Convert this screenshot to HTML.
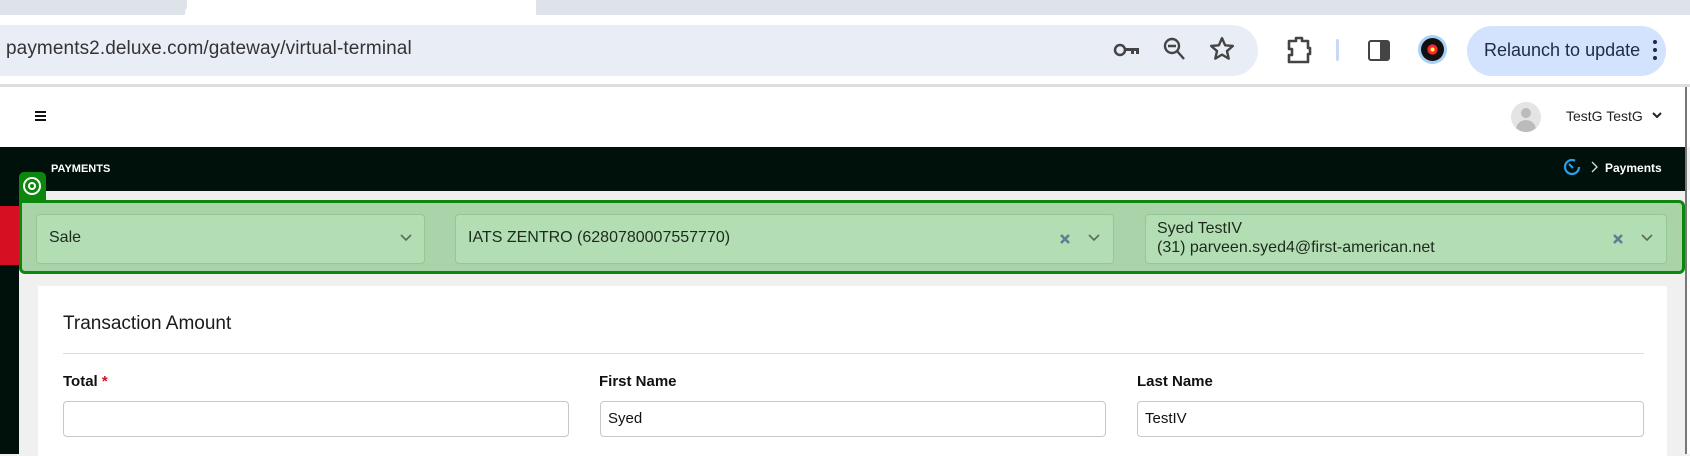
<!DOCTYPE html>
<html><head><meta charset="utf-8"><style>
*{box-sizing:border-box;margin:0;padding:0}
body{width:1690px;height:454px;overflow:hidden;background:#f0f0f0;font-family:"Liberation Sans",Arial,sans-serif;position:relative}
.abs{position:absolute}
</style></head><body>
<!-- tab strip -->
<div class="abs" style="left:0;top:0;width:1690px;height:15px;background:#dee3ea"></div>
<div class="abs" style="left:185px;top:0;width:351px;height:16px;background:#fff;border-radius:0"></div>
<div class="abs" style="left:175px;top:0;width:12px;height:15px;background:#dee3ea;border-bottom-right-radius:10px"></div>
<div class="abs" style="left:536px;top:0;width:12px;height:15px;background:#dee3ea;border-bottom-left-radius:10px"></div>
<!-- toolbar -->
<div class="abs" style="left:0;top:15px;width:1690px;height:70px;background:#fff"></div>
<div class="abs" style="left:-30px;top:25px;width:1288px;height:51px;background:#e9edf6;border-radius:26px"></div>
<div class="abs" style="left:6px;top:38px;font-size:19px;color:#333;letter-spacing:0.1px">payments2.deluxe.com/gateway/virtual-terminal</div>
<svg class="abs" style="left:1113px;top:38px" width="30" height="24" viewBox="0 0 30 24"><circle cx="7" cy="12" r="5" fill="none" stroke="#444" stroke-width="2.5"/><path d="M12 10h14v6h-3v-3h-2v3h-3v-3h-6z" fill="#444"/></svg>
<svg class="abs" style="left:1162px;top:36px" width="26" height="28" viewBox="0 0 26 28"><circle cx="10" cy="10" r="7" fill="none" stroke="#444" stroke-width="2.4"/><path d="M6 10h8M15 15l7 8" stroke="#444" stroke-width="2.4"/></svg>
<svg class="abs" style="left:1209px;top:36px" width="26" height="26" viewBox="0 0 24 24"><path d="M12 2l2.9 6.6 7.1.6-5.4 4.7 1.6 7-6.2-3.7-6.2 3.7 1.6-7L2 9.2l7.1-.6z" fill="none" stroke="#444" stroke-width="2.2" stroke-linejoin="round"/></svg>
<svg class="abs" style="left:1285px;top:35px" width="28" height="30" viewBox="0 0 28 30"><path d="M4 6h7V3h6v3h6v7h2v6h-2v8H4v-7h3v-6H4z" fill="none" stroke="#444" stroke-width="2.6" stroke-linejoin="round"/></svg>
<div class="abs" style="left:1336px;top:39px;width:3px;height:22px;background:#c9d9f3;border-radius:2px"></div>
<div class="abs" style="left:1368px;top:40px;width:22px;height:21px;border:2.5px solid #444;border-radius:3px;background:linear-gradient(90deg,#fff 55%,#444 55%)"></div>
<div class="abs" style="left:1418px;top:35px;width:29px;height:29px;border-radius:50%;background:#a9d0f7"></div>
<div class="abs" style="left:1421px;top:38px;width:23px;height:23px;border-radius:50%;background:radial-gradient(circle,#ff4 0 12%,#f23 14% 30%,#111 33%)"></div>
<div class="abs" style="left:1467px;top:26px;width:199px;height:50px;background:#d3e3fd;border-radius:25px"></div>
<div class="abs" style="left:1484px;top:40px;font-size:18px;color:#1f2a44">Relaunch to update</div>
<div class="abs" style="left:1653px;top:40px;width:4px;height:4px;border-radius:50%;background:#1f2a44;box-shadow:0 8px 0 #1f2a44,0 16px 0 #1f2a44"></div>
<div class="abs" style="left:0;top:84px;width:1690px;height:3px;background:#dedede"></div>
<!-- app header -->
<div class="abs" style="left:0;top:87px;width:1690px;height:60px;background:#fff"></div>
<div class="abs" style="left:1685px;top:190px;width:5px;height:264px;background:#fff"></div>
<div class="abs" style="left:1685px;top:87px;width:2px;height:367px;background:#777"></div>
<div class="abs" style="left:35px;top:111px;width:11px;height:2px;background:#111;box-shadow:0 4px 0 #111,0 8px 0 #111"></div>
<div class="abs" style="left:1511px;top:102px;width:30px;height:30px;border-radius:50%;background:#e4e4e4;overflow:hidden"><div style="position:absolute;left:10px;top:6px;width:10px;height:10px;border-radius:50%;background:#bbb"></div><div style="position:absolute;left:5px;top:18px;width:20px;height:14px;border-radius:10px 10px 0 0;background:#bbb"></div></div>
<div class="abs" style="left:1566px;top:108px;font-size:14px;color:#222">TestG TestG</div>
<svg class="abs" style="left:1652px;top:111px" width="10" height="8" viewBox="0 0 10 8"><path d="M1 2l4 4 4-4" fill="none" stroke="#222" stroke-width="2"/></svg>
<!-- black bar -->
<div class="abs" style="left:0;top:147px;width:1685px;height:44px;background:#00100b"></div>
<div class="abs" style="left:51px;top:163px;font-size:11px;color:#fff;font-weight:bold">PAYMENTS</div>
<svg class="abs" style="left:1563px;top:158px" width="18" height="18" viewBox="0 0 18 18"><circle cx="9" cy="9" r="7" fill="none" stroke="#2aa0ea" stroke-width="2.2" stroke-dasharray="36 8"/><path d="M6 6l4 4" stroke="#2aa0ea" stroke-width="2"/></svg>
<svg class="abs" style="left:1590px;top:161px" width="8" height="12" viewBox="0 0 8 12"><path d="M2 1l5 5-5 5" fill="none" stroke="#ddd" stroke-width="1.3"/></svg>
<div class="abs" style="left:1605px;top:161px;font-size:12px;color:#fff;font-weight:bold">Payments</div>
<!-- left sidebar -->
<div class="abs" style="left:0;top:191px;width:19px;height:263px;background:#00100b"></div>
<div class="abs" style="left:0;top:206px;width:19px;height:59px;background:#d60f22"></div>
<!-- green tab -->
<div class="abs" style="left:19px;top:172px;width:27px;height:30px;background:#0b870b;border-radius:5px 5px 0 0"></div>
<div class="abs" style="left:23px;top:177px;width:18px;height:18px;border-radius:50%;border:2px solid #fff"></div>
<div class="abs" style="left:28px;top:182px;width:8px;height:8px;border-radius:50%;border:2px solid #fff"></div>
<!-- green box -->
<div class="abs" style="left:19px;top:200px;width:1666px;height:74px;background:#aad3aa;border:3px solid #0b870b;border-radius:0 6px 6px 6px"></div>
<div class="abs" style="left:36px;top:214px;width:389px;height:50px;background:#b3ddb3;border:1px solid #95c695;border-radius:4px"></div>
<div class="abs" style="left:49px;top:229px;font-size:16px;color:#1d2b1d">Sale</div>
<svg class="abs" style="left:399px;top:233px" width="14" height="10" viewBox="0 0 14 10"><path d="M2 2l5 5 5-5" fill="none" stroke="#5a6b5a" stroke-width="1.6"/></svg>
<div class="abs" style="left:455px;top:214px;width:659px;height:50px;background:#b3ddb3;border:1px solid #95c695;border-radius:4px"></div>
<div class="abs" style="left:468px;top:229px;font-size:16px;color:#1d2b1d">IATS ZENTRO (6280780007557770)</div>
<svg class="abs" style="left:1059px;top:233px" width="12" height="12" viewBox="0 0 12 12"><path d="M2 2l8 8M10 2l-8 8" stroke="#5b7f93" stroke-width="2.6"/></svg>
<svg class="abs" style="left:1087px;top:233px" width="14" height="10" viewBox="0 0 14 10"><path d="M2 2l5 5 5-5" fill="none" stroke="#5a6b5a" stroke-width="1.6"/></svg>
<div class="abs" style="left:1145px;top:214px;width:522px;height:50px;background:#b3ddb3;border:1px solid #95c695;border-radius:4px"></div>
<div class="abs" style="left:1157px;top:219px;font-size:16px;line-height:19px;color:#1d2b1d">Syed TestIV<br>(31) parveen.syed4@first-american.net</div>
<svg class="abs" style="left:1612px;top:233px" width="12" height="12" viewBox="0 0 12 12"><path d="M2 2l8 8M10 2l-8 8" stroke="#5b7f93" stroke-width="2.6"/></svg>
<svg class="abs" style="left:1640px;top:233px" width="14" height="10" viewBox="0 0 14 10"><path d="M2 2l5 5 5-5" fill="none" stroke="#5a6b5a" stroke-width="1.6"/></svg>
<!-- card -->
<div class="abs" style="left:38px;top:286px;width:1629px;height:170px;background:#fff"></div>
<div class="abs" style="left:63px;top:313px;font-size:19px;color:#1a1a1a">Transaction Amount</div>
<div class="abs" style="left:63px;top:353px;width:1581px;height:1px;background:#dcdcdc"></div>
<div class="abs" style="left:63px;top:373px;font-size:15px;font-weight:bold;color:#111">Total <span style="color:#d01020">*</span></div>
<div class="abs" style="left:599px;top:373px;font-size:15px;font-weight:bold;color:#111">First Name</div>
<div class="abs" style="left:1137px;top:373px;font-size:15px;font-weight:bold;color:#111">Last Name</div>
<div class="abs" style="left:63px;top:401px;width:506px;height:36px;border:1px solid #c8c8c8;border-radius:4px"></div>
<div class="abs" style="left:600px;top:401px;width:506px;height:36px;border:1px solid #c8c8c8;border-radius:4px"></div>
<div class="abs" style="left:608px;top:410px;font-size:15px;color:#111">Syed</div>
<div class="abs" style="left:1137px;top:401px;width:507px;height:36px;border:1px solid #c8c8c8;border-radius:4px"></div>
<div class="abs" style="left:1145px;top:410px;font-size:15px;color:#111">TestIV</div>
</body></html>
